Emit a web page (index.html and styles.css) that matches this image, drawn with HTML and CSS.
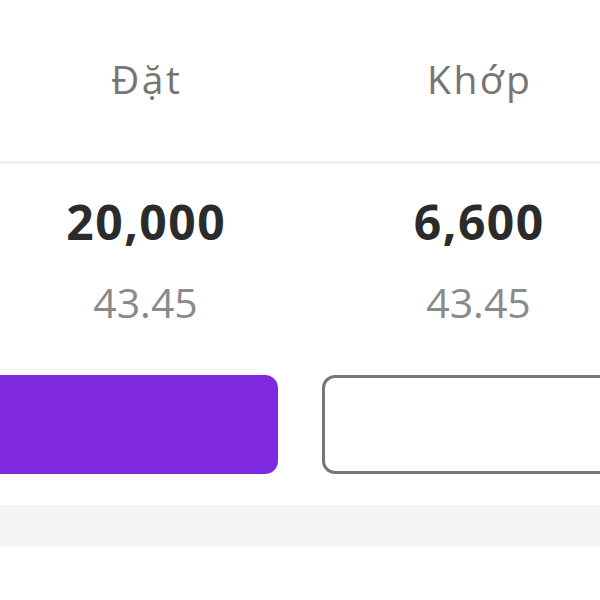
FILE: index.html
```html
<!DOCTYPE html>
<html lang="vi">
<head>
  <meta charset="UTF-8">
  <meta name="viewport" content="width=device-width, initial-scale=1.0">
  <title>Lệnh</title>
  <link rel="stylesheet" href="styles.css">
</head>
<body>
  <div class="order">
    <div class="order__head">
      <div class="order__col">Đặt</div>
      <div class="order__col">Khớp</div>
    </div>

    <div class="order__body">
      <div class="order__col">
        <p class="order__qty">20,000</p>
        <p class="order__price">43.45</p>
      </div>
      <div class="order__col">
        <p class="order__qty">6,600</p>
        <p class="order__price">43.45</p>
      </div>
    </div>

    <div class="order__actions">
      <button class="btn btn--primary"></button>
      <button class="btn btn--outline"></button>
    </div>

    <div class="order__band"></div>
  </div>
</body>
</html>
```

FILE: styles.css
```css
* {
  margin: 0;
  padding: 0;
  box-sizing: border-box;
}

body {
  background: #ffffff;
  font-family: "Open Sans", "Noto Sans", sans-serif;
  overflow: hidden;
}

.order {
  width: 600px;
}

.order__head,
.order__body {
  display: flex;
  margin-left: -21px;
}

.order__col {
  width: 333px;
  flex: none;
  text-align: center;
}

.order__head {
  padding: 54px 0 57px;
  border-bottom: 3px solid #f1f1f1;
  font-size: 39px;
  line-height: 50px;
  letter-spacing: 2.5px;
  color: #757575;
}

.order__head .order__col {
  padding-left: 2.5px;
}

.order__body {
  padding-top: 30px;
}

.order__qty {
  font-size: 48px;
  line-height: 56px;
  font-weight: 700;
  letter-spacing: 1.5px;
  padding-left: 1.5px;
  color: #2b2b2b;
}

.order__price {
  margin-top: 26px;
  font-size: 41px;
  line-height: 52px;
  color: #8a8a8a;
}

.order__actions {
  display: flex;
  gap: 44px;
  margin-top: 47px;
  margin-left: -40px;
  width: 700px;
}

.btn {
  flex: none;
  width: 318px;
  height: 99px;
  border-radius: 13px;
  cursor: pointer;
}

.btn--primary {
  background: #7f2ae0;
  border: none;
}

.btn--outline {
  background: #ffffff;
  border: 3px solid #777777;
}

.order__band {
  margin-top: 31px;
  height: 42px;
  background: #f4f4f4;
}
```
